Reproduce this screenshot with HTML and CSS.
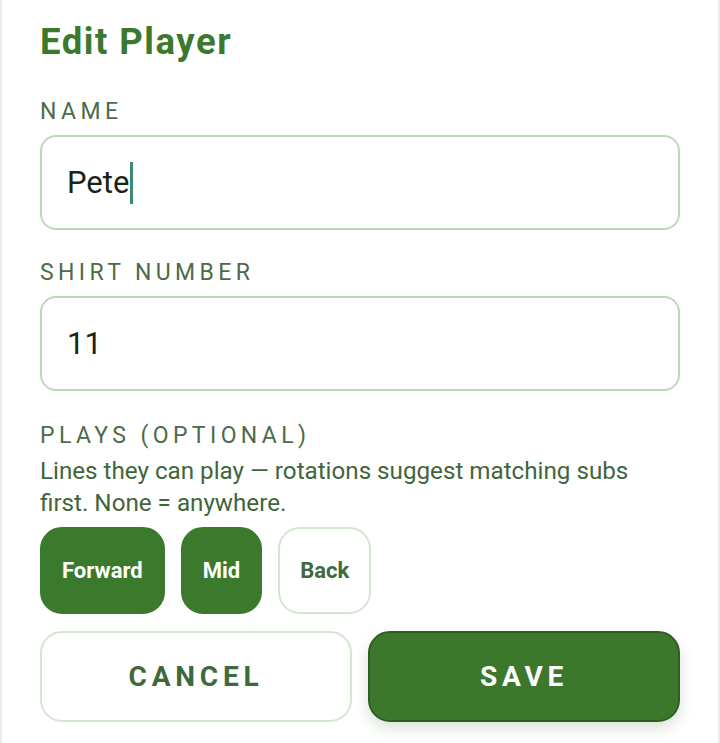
FILE: index.html
```html
<!DOCTYPE html>
<html lang="en">
<head>
<meta charset="utf-8">
<title>Edit Player</title>
<link rel="stylesheet" href="styles.css">
</head>
<body>
<div class="sheet">
  <h1 class="title">Edit Player</h1>

  <div class="field">
    <label class="label">NAME</label>
    <div class="input"><span class="value">Pete</span><span class="caret"></span></div>
  </div>

  <div class="field field-number">
    <label class="label">SHIRT NUMBER</label>
    <div class="input"><span class="value">11</span></div>
  </div>

  <div class="field field-plays">
    <label class="label">PLAYS (OPTIONAL)</label>
    <p class="hint">Lines they can play — rotations suggest matching subs first. None = anywhere.</p>
    <div class="chips">
      <button class="chip chip-on">Forward</button>
      <button class="chip chip-on">Mid</button>
      <button class="chip">Back</button>
    </div>
  </div>

  <div class="actions">
    <button class="btn btn-cancel">CANCEL</button>
    <button class="btn btn-save">SAVE</button>
  </div>
</div>
</body>
</html>
```

FILE: styles.css
```css
* { box-sizing: border-box; }
html, body { margin: 0; padding: 0; background: #ffffff; }
body { font-family: Roboto, "Noto Sans", sans-serif; }

.sheet {
  width: 720px;
  height: 743px;
  border-left: 2px solid #ececec;
  border-right: 2px solid #ececec;
  padding: 21px 38px 0 38px;
  background: #fff;
}

.title {
  margin: 0;
  font-size: 36.5px;
  line-height: 41px;
  font-weight: 700;
  color: #3b7a2e;
  letter-spacing: 1.5px;
}

.field { display: flex; flex-direction: column; margin-top: 37px; }
.field-number { margin-top: 30px; }
.field-plays { margin-top: 32px; }

.label {
  font-size: 23px;
  line-height: 26px;
  font-weight: 400;
  letter-spacing: 4.4px;
  color: #4c6b48;
}

.input {
  margin-top: 10px;
  height: 95px;
  border: 2px solid #bcd9b6;
  border-radius: 16px;
  display: flex;
  align-items: center;
  padding: 0 25px;
}
.value {
  font-size: 31px;
  color: #172517;
}
.caret {
  width: 3px;
  height: 42px;
  background: #3e8a76;
  margin-left: 1px;
}

.hint {
  margin: 6px 0 0 0;
  font-size: 24.2px;
  line-height: 32px;
  color: #3f663b;
}

.chips { display: flex; gap: 16px; margin-top: 8px; }
.chip {
  height: 87px;
  padding: 0 20px;
  border-radius: 22px;
  border: 2px solid #d3e6cf;
  background: #fff;
  font-family: Roboto, sans-serif;
  font-size: 22px;
  font-weight: 700;
  color: #3f6a3b;
}
.chip-on {
  background: #3b7a2c;
  border-color: #3b7a2c;
  color: #ffffff;
}

.actions {
  display: grid;
  grid-template-columns: 1fr 1fr;
  gap: 16px;
  margin-top: 17px;
}
.btn {
  height: 91px;
  border-radius: 22px;
  font-family: Roboto, sans-serif;
  font-size: 28px;
  font-weight: 700;
  letter-spacing: 4.8px;
}
.btn-cancel {
  background: #fff;
  border: 2px solid #d3e6cf;
  color: #3e6a3a;
}
.btn-save {
  background: #3b782c;
  border: 2px solid #2f5e25;
  color: #ffffff;
  box-shadow: 0 6px 14px rgba(40, 90, 30, 0.18);
}
```
